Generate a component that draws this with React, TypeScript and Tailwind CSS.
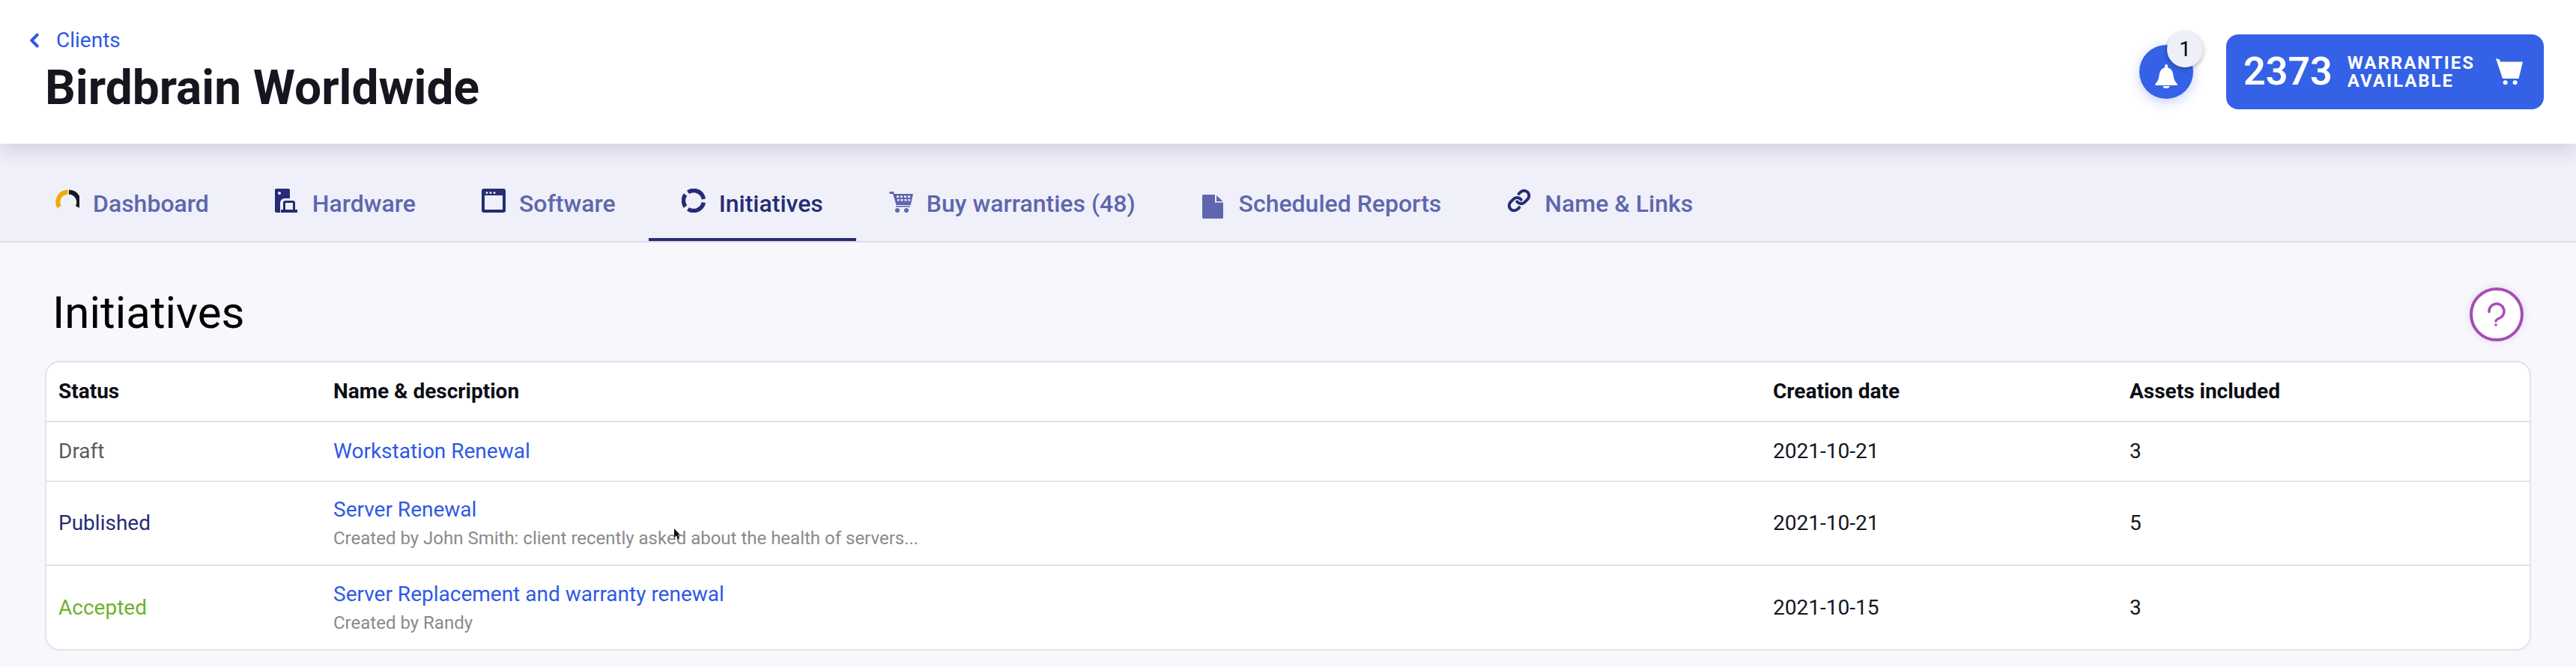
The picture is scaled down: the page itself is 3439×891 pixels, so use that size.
import React from 'react';
import { ChevronLeft, Link } from 'lucide-react';

const DashboardIcon = () => (
  <svg viewBox="0 0 32 32" className="h-8 w-8 shrink-0" fill="none" strokeWidth="6">
    <path d="M5 24.500A13.500 13.500 0 0 1 16.500 4.500" stroke="#f2a900" />
    <path d="M18 4.500A13.500 13.500 0 0 1 29.500 24.500" stroke="#15161f" />
  </svg>
);

const HardwareIcon = () => (
  <svg viewBox="0 0 32 32" className="h-8 w-8 shrink-0" fill="#262c75">
    <path fillRule="evenodd" d="M2 0h16a2 2 0 0 1 2 2v11h-7a6 6 0 0 0-6 6v13H2a2 2 0 0 1-2-2V2a2 2 0 0 1 2-2Zm4 4a2 2 0 1 0 0 4 2 2 0 0 0 0-4Z" />
    <path fillRule="evenodd" d="M14 16h10a3 3 0 0 1 3 3v9h3v4H8v-4h3v-9a3 3 0 0 1 3-3Zm0 3v9h10v-9H14Z" />
  </svg>
);

const SoftwareIcon = () => (
  <svg viewBox="0 0 32 32" className="h-8 w-8 shrink-0" fill="#262c75">
    <path fillRule="evenodd" d="M3 0h26a3 3 0 0 1 3 3v26a3 3 0 0 1-3 3H3a3 3 0 0 1-3-3V3a3 3 0 0 1 3-3Zm1 9v19h24V9H4Zm3-5a1.500 1.500 0 1 0 0 3 1.500 1.500 0 0 0 0-3Zm5 0a1.500 1.500 0 1 0 0 3 1.500 1.500 0 0 0 0-3Zm5 0a1.500 1.500 0 1 0 0 3 1.500 1.500 0 0 0 0-3Z" />
  </svg>
);

const InitiativesIcon = () => (
  <svg viewBox="0 0 32 32" className="h-8 w-8 shrink-0" fill="none" stroke="#262c75" strokeWidth="5.500">
    <path d="M8.500 4.800A13.500 13.500 0 0 1 29.400 14" />
    <path d="M29.300 18.500A13.500 13.500 0 0 1 8.500 27.200" />
    <path d="M5 24A13.500 13.500 0 0 1 5 8" />
  </svg>
);

const CartLinesIcon = () => (
  <svg viewBox="0 0 32 32" className="h-8 w-8 shrink-0" fill="#5f66ae">
    <path
      fillRule="evenodd"
      d="M0.500 4h5.500l1 3h25l-3.200 15H9.500L5 7H0.500V4ZM10 9.500v2.500h3V9.500h-3Zm5 0v2.500h3V9.500h-3Zm5 0v2.500h3V9.500h-3Zm5 0v2.500h3V9.500h-3ZM11 14v2.500h2.500V14H11Zm4.500 0v2.500h3V14h-3Zm5 0v2.500h3V14h-3Zm5 0v2.500h2.500V14h-2.500Z"
    />
    <rect x="9" y="23" width="19" height="1.500" />
    <circle cx="11" cy="29" r="3" />
    <circle cx="23" cy="29" r="3" />
  </svg>
);

const FileIcon = () => (
  <svg viewBox="0 0 32 32" className="mt-[8px] h-8 w-8 shrink-0" fill="#5f66ae">
    <path d="M2.500 0H18v10.500h11V30.500a1.500 1.500 0 0 1-1.500 1.500H2.500A1.500 1.500 0 0 1 1 30.500V1.500A1.500 1.500 0 0 1 2.500 0Z" />
    <path d="M20 1l8.500 8H20V1Z" />
  </svg>
);

const tabs = [
  { label: 'Dashboard', icon: <DashboardIcon /> },
  { label: 'Hardware', icon: <HardwareIcon /> },
  { label: 'Software', icon: <SoftwareIcon /> },
  { label: 'Initiatives', icon: <InitiativesIcon />, active: true },
  { label: 'Buy warranties (48)', icon: <CartLinesIcon /> },
  { label: 'Scheduled Reports', icon: <FileIcon /> },
  { label: 'Name & Links', icon: <Link className="h-8 w-8 shrink-0 text-[#262c75]" strokeWidth={3} /> },
];

const rows = [
  { status: 'Draft', statusColor: 'text-[#5c5c5c]', name: 'Workstation Renewal', date: '2021-10-21', assets: '3', h: 'h-[80px]' },
  {
    status: 'Published',
    statusColor: 'text-[#262c75]',
    name: 'Server Renewal',
    note: 'Created by John Smith: client recently asked about the health of servers...',
    date: '2021-10-21',
    assets: '5',
    h: 'h-[112px]',
  },
  {
    status: 'Accepted',
    statusColor: 'text-[#6fb02c]',
    name: 'Server Replacement and warranty renewal',
    note: 'Created by Randy',
    date: '2021-10-15',
    assets: '3',
    h: 'h-[111px]',
  },
];

const cols = 'grid grid-cols-[367px_1922px_476px_1fr] items-center pl-[16px]';

export default function App() {
  return (
    <div className="relative h-[891px] overflow-hidden bg-[#f7f7fc] font-['Roboto',sans-serif] text-[#15161f]">
      <header className="relative z-10 flex h-[192px] items-center justify-between bg-white pr-[43px] shadow-[0_8px_24px_rgba(30,30,70,0.16)]">
        <div className="pl-[60px]">
          <a className="-ml-[29px] flex items-center text-[28px] leading-[36px] text-[#2f59e5]">
            <ChevronLeft className="mr-[14px] h-[30px] w-[30px]" strokeWidth={3.2} />
            Clients
          </a>
          <h1 className="mt-[8px] text-[64px] font-bold leading-[76px] text-[#15161f]">Birdbrain Worldwide</h1>
        </div>
        <div className="flex items-center gap-[44px]">
          <div className="relative flex h-[72px] w-[72px] items-center justify-center rounded-full bg-[#3461e6] shadow-[0_4px_16px_rgba(52,97,230,0.3)]">
            <svg viewBox="0 0 30 32" className="mt-[12px] h-[32px] w-[30px]" fill="white">
              <path d="M15 0a2 2 0 0 1 2 2v2.200C22 5.500 24 10 24.500 15c.5 4 1.500 7.500 5 11 .8 1 .2 2-1 2H1.500c-1.200 0-1.800-1-1-2 3.500-3.500 4.500-7 5-11C6 10 8 5.500 13 4.200V2a2 2 0 0 1 2-2Z" />
              <path d="M10.500 29h9a4.500 3 0 0 1-9 0Z" />
            </svg>
            <span className="absolute -right-[13px] -top-[18px] flex h-[48px] w-[48px] items-center justify-center rounded-full bg-[#eeeff9] text-[28px] text-black shadow-[0_2px_6px_rgba(0,0,0,0.3)]">
              1
            </span>
          </div>
          <button className="flex h-[100px] w-[424px] items-center rounded-[16px] bg-[#3461e6] pl-[23px] text-white">
            <span className="text-[52px] font-semibold leading-none">2373</span>
            <span className="ml-[20px] text-left text-[24px] font-bold leading-[24px] tracking-[2px]">
              WARRANTIES
              <br />
              AVAILABLE
            </span>
            <svg viewBox="0 0 36 36" className="ml-[28px] h-[36px] w-[36px]" fill="white">
              <path d="M0 0l5 1.500 1 3h30L30.500 27H9L0 0Z" />
              <circle cx="12.600" cy="32.300" r="3" />
              <circle cx="25.600" cy="32.300" r="3" />
            </svg>
          </button>
        </div>
      </header>

      <nav className="flex h-[132px] items-end border-b-2 border-[#dcdce6] bg-[#eff0f9] pl-[30px]">
        {tabs.map((tab) => (
          <div
            key={tab.label}
            className={`flex h-[70px] items-start gap-[18px] border-b-4 px-[44px] text-[32px] font-medium leading-[40px] ${
              tab.active ? 'border-[#262c75] text-[#262c75]' : 'border-transparent text-[#5f66ae]'
            }`}
          >
            {tab.icon}
            <span className="whitespace-nowrap">{tab.label}</span>
          </div>
        ))}
      </nav>

      <main className="pl-[60px] pr-[60px]">
        <div className="flex h-[158px] items-start justify-between pr-[10px] pt-[60px]">
          <h2 className="-mt-[2px] ml-[10px] text-[60px] font-normal leading-[72px] text-black">Initiatives</h2>
          <div className="flex h-[72px] w-[72px] items-center justify-center rounded-full border-4 border-[#a54db5] bg-white shadow-[0_0_10px_rgba(165,77,181,0.2)]">
            <svg viewBox="0 0 24 32" className="h-[32px] w-[24px]" fill="none" stroke="#a54db5" strokeWidth="3.500" strokeLinecap="round">
              <path d="M2 12.500A10 10 0 1 1 16 21c-3.500 1.500-5 2.500-5 4" />
              <circle cx="11" cy="30" r="1" fill="#a54db5" strokeWidth="1.500" />
            </svg>
          </div>
        </div>

        <div className="overflow-hidden rounded-[20px] border-2 border-[#e2e3e8] bg-white text-[28px] leading-[36px]">
          <div className={`${cols} h-[80px] border-b-2 border-[#e2e3e8] font-bold text-[#0d0e16]`}>
            <span>Status</span>
            <span>Name &amp; description</span>
            <span>Creation date</span>
            <span>Assets included</span>
          </div>
          {rows.map((row, i) => (
            <div key={row.name} className={`${cols} ${row.h} ${i < rows.length - 1 ? 'border-b-2 border-[#e2e3e8]' : ''}`}>
              <span className={row.statusColor}>{row.status}</span>
              <div>
                <a className="block text-[#2f59e5]">{row.name}</a>
                {row.note && <p className="mt-[4px] text-[24px] leading-[32px] text-[#8a8a8a]">{row.note}</p>}
              </div>
              <span>{row.date}</span>
              <span>{row.assets}</span>
            </div>
          ))}
        </div>
      </main>

      {/* mouse pointer caught in the capture */}
      <svg viewBox="0 0 9 15" className="absolute left-[900px] top-[706px] h-[15px] w-[9px]" fill="#111">
        <path d="M0 0l8 8.500H5l2 5-2 1-2-5-3 2.500V0Z" />
      </svg>
    </div>
  );
}
